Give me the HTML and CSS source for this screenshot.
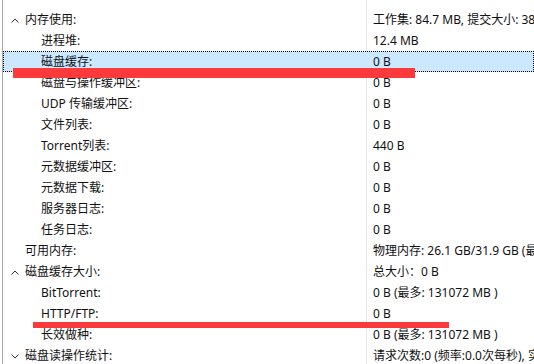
FILE: index.html
```html
<!DOCTYPE html>
<html lang="zh-CN">
<head>
    <meta charset="UTF-8">
    <title>统计</title>
    <link rel="stylesheet" href="styles.css">
</head>
<body>
    <div class="tree">
        <div class="row">
            <div class="label"><span class="toggle"><svg width="8" height="5" viewBox="0 0 8 5"><polyline points="0.5,4.5 4,1 7.5,4.5" /></svg></span>内存使用:</div>
            <div class="value">工作集: 84.7 MB, 提交大小: 38.1 MB</div>
        </div>
        <div class="row child">
            <div class="label"><span class="toggle"></span>进程堆:</div>
            <div class="value">12.4 MB</div>
        </div>
        <div class="row child selected">
            <div class="label"><span class="toggle"></span>磁盘缓存:</div>
            <div class="value">0 B</div>
        </div>
        <div class="row child">
            <div class="label"><span class="toggle"></span>磁盘与操作缓冲区:</div>
            <div class="value">0 B</div>
        </div>
        <div class="row child">
            <div class="label"><span class="toggle"></span>UDP 传输缓冲区:</div>
            <div class="value">0 B</div>
        </div>
        <div class="row child">
            <div class="label"><span class="toggle"></span>文件列表:</div>
            <div class="value">0 B</div>
        </div>
        <div class="row child">
            <div class="label"><span class="toggle"></span>Torrent列表:</div>
            <div class="value">440 B</div>
        </div>
        <div class="row child">
            <div class="label"><span class="toggle"></span>元数据缓冲区:</div>
            <div class="value">0 B</div>
        </div>
        <div class="row child">
            <div class="label"><span class="toggle"></span>元数据下载:</div>
            <div class="value">0 B</div>
        </div>
        <div class="row child">
            <div class="label"><span class="toggle"></span>服务器日志:</div>
            <div class="value">0 B</div>
        </div>
        <div class="row child">
            <div class="label"><span class="toggle"></span>任务日志:</div>
            <div class="value">0 B</div>
        </div>
        <div class="row">
            <div class="label"><span class="toggle"></span>可用内存:</div>
            <div class="value">物理内存: 26.1 GB/31.9 GB (最大可用: 0 B)</div>
        </div>
        <div class="row">
            <div class="label"><span class="toggle"><svg width="8" height="5" viewBox="0 0 8 5"><polyline points="0.5,4.5 4,1 7.5,4.5" /></svg></span>磁盘缓存大小:</div>
            <div class="value">总大小：0 B</div>
        </div>
        <div class="row child">
            <div class="label"><span class="toggle"></span>BitTorrent:</div>
            <div class="value">0 B (最多: 131072 MB )</div>
        </div>
        <div class="row child">
            <div class="label"><span class="toggle"></span>HTTP/FTP:</div>
            <div class="value">0 B</div>
        </div>
        <div class="row child">
            <div class="label"><span class="toggle"></span>长效做种:</div>
            <div class="value">0 B (最多: 131072 MB )</div>
        </div>
        <div class="row">
            <div class="label"><span class="toggle"><svg width="8" height="5" viewBox="0 0 8 5"><polyline points="0.5,0.5 4,4 7.5,0.5" /></svg></span>磁盘读操作统计:</div>
            <div class="value">请求次数:0 (频率:0.0次每秒), 实际读取: 0 B</div>
        </div>
    </div>

    <div class="mark mark-one"></div>
    <div class="mark mark-two"></div>
</body>
</html>
```

FILE: styles.css
```css
* {
    margin: 0;
    padding: 0;
    box-sizing: border-box;
}

body {
    font-family: "Noto Sans", "Noto Sans CJK SC", sans-serif;
    font-size: 12px;
    color: #111;
    background-color: #fff;
    width: 534px;
    height: 364px;
    overflow: hidden;
    position: relative;
}

.tree {
    margin-left: 2px;
    padding-top: 9px;
    height: 364px;
    border-left: 1px solid #a9a9a9;
    background-image: linear-gradient(to right, transparent 363px, #e6e6e6 363px, #e6e6e6 364px, transparent 364px);
}

.row {
    display: grid;
    grid-template-columns: 363px 1fr;
    height: 21px;
    line-height: 21px;
    white-space: nowrap;
}

.row.selected {
    background-color: #cce8ff;
    outline: 1px dotted #000;
    outline-offset: -1px;
}

.label {
    display: flex;
    align-items: center;
    padding-left: 8px;
    overflow: hidden;
}

.row.child .label {
    padding-left: 24px;
}

.toggle {
    width: 14px;
    flex: none;
    display: flex;
    align-items: center;
}

.toggle svg {
    fill: none;
    stroke: #333;
    stroke-width: 1;
    margin-top: 1px;
}

.value {
    padding-left: 7px;
    overflow: hidden;
}

.mark {
    position: absolute;
    background-color: #fc3a3c;
}

.mark-one {
    left: 13px;
    top: 68px;
    width: 402px;
    height: 10px;
}

.mark-two {
    left: 33px;
    top: 322px;
    width: 416px;
    height: 6px;
}
```
